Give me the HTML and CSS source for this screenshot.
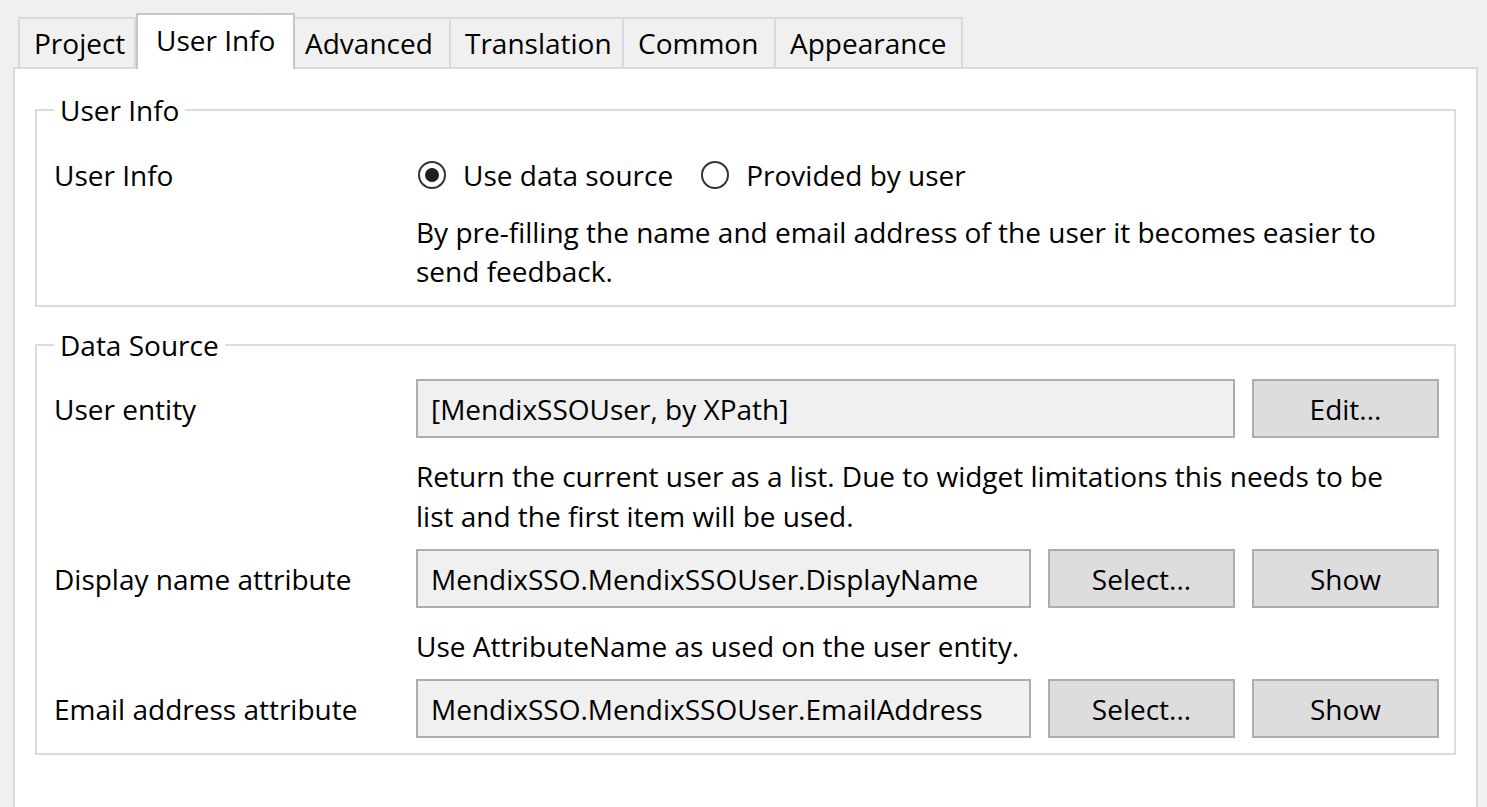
FILE: index.html
```html
<!DOCTYPE html>
<html>
<head>
<meta charset="utf-8">
<link rel="stylesheet" href="styles.css">
</head>
<body>
<div class="tabs">
  <div class="tab tab-project">Project</div>
  <div class="tab tab-userinfo active">User Info</div>
  <div class="tab tab-advanced">Advanced</div>
  <div class="tab tab-translation">Translation</div>
  <div class="tab tab-common">Common</div>
  <div class="tab tab-appearance">Appearance</div>
</div>
<div class="panel">
  <fieldset class="group group-userinfo">
    <legend>User Info</legend>
    <div class="row">
      <div class="label">User Info</div>
      <div class="radios">
        <label class="radio"><span class="dot checked"></span><span>Use data source</span></label>
        <label class="radio"><span class="dot"></span><span>Provided by user</span></label>
      </div>
    </div>
    <div class="desc desc-first">By pre-filling the name and email address of the user it becomes easier to<br>send feedback.</div>
  </fieldset>
  <fieldset class="group group-datasource">
    <legend>Data Source</legend>
    <div class="row">
      <div class="label">User entity</div>
      <div class="controls">
        <div class="field span2">[MendixSSOUser, by XPath]</div>
        <div class="btn">Edit...</div>
      </div>
    </div>
    <div class="desc">Return the current user as a list. Due to widget limitations this needs to be<br>list and the first item will be used.</div>
    <div class="row">
      <div class="label">Display name attribute</div>
      <div class="controls">
        <div class="field">MendixSSO.MendixSSOUser.DisplayName</div>
        <div class="btn">Select...</div>
        <div class="btn">Show</div>
      </div>
    </div>
    <div class="desc">Use AttributeName as used on the user entity.</div>
    <div class="row">
      <div class="label">Email address attribute</div>
      <div class="controls">
        <div class="field">MendixSSO.MendixSSOUser.EmailAddress</div>
        <div class="btn">Select...</div>
        <div class="btn">Show</div>
      </div>
    </div>
  </fieldset>
</div>
</body>
</html>
```
FILE: styles.css
```css
* { box-sizing: border-box; }
html, body { margin: 0; padding: 0; }
body {
  background: #f0f0f0;
  font-family: "Open Sans", "Noto Sans", sans-serif;
  font-size: 28px;
  color: #000;
  width: 1487px;
  height: 807px;
  overflow: hidden;
}
.tabs {
  display: flex;
  align-items: flex-end;
  padding: 13px 0 0 18px;
  height: 69px;
  position: relative;
  z-index: 2;
}
.tab {
  height: 52px;
  border: 2px solid #dadada;
  border-left: none;
  background: #f0f0f0;
  display: flex;
  align-items: center;
  padding-left: 14px;
  white-space: nowrap;
}
.tab-project { width: 118px; border-left: 2px solid #dadada; }
.tab-userinfo { width: 159px; }
.tab-advanced { width: 156px; padding-left: 10px; }
.tab-translation { width: 173px; }
.tab-common { width: 152px; }
.tab-appearance { width: 187px; }
.tab.active {
  height: 56px;
  background: #fff;
  border: 2px solid #c6c6c6;
  border-bottom: none;
  padding-left: 18px;
  padding-bottom: 4px;
}
.panel {
  margin: -2px 0 0 13px;
  width: 1465px;
  height: 760px;
  background: #fff;
  border: 2px solid #dadada;
  padding: 23px 20px 0 20px;
}
.group {
  margin: 0;
  border: 2px solid #dcdcdc;
  padding: 0 15px 12px 17px;
  min-width: 0;
}
.group legend {
  padding: 0 6px;
  margin-left: 0;
  line-height: 36px;
}
.group-userinfo { padding-top: 17px; padding-bottom: 14px; }
.group-datasource { margin-top: 20px; padding-top: 16px; padding-bottom: 15px; }
.row {
  display: grid;
  grid-template-columns: 362px 1fr;
  align-items: center;
  min-height: 59px;
}
.label { white-space: nowrap; }
.radios {
  display: flex;
  align-items: center;
  gap: 28px;
  padding-left: 2px;
}
.radio {
  display: flex;
  align-items: center;
  gap: 17px;
}
.dot {
  width: 28px;
  height: 28px;
  border-radius: 50%;
  border: 2px solid #333;
  display: flex;
  align-items: center;
  justify-content: center;
  flex: none;
}
.dot.checked::after {
  content: "";
  width: 14px;
  height: 14px;
  border-radius: 50%;
  background: #1f1f1f;
}
.desc {
  margin: 18px 0 13px 362px;
  line-height: 40px;
  white-space: nowrap;
}
.desc-first { margin-top: 9px; margin-bottom: 0; line-height: 39px; }
.controls {
  display: grid;
  grid-template-columns: 1fr 187px 187px;
  gap: 17px;
}
.field {
  height: 59px;
  background: #f0f0f0;
  border: 2px solid #adadad;
  display: flex;
  align-items: center;
  padding-left: 13px;
  white-space: nowrap;
  overflow: hidden;
}
.field.span2 { grid-column: span 2; }
.btn {
  height: 59px;
  background: #dddddd;
  border: 2px solid #adadad;
  display: flex;
  align-items: center;
  justify-content: center;
}
```
